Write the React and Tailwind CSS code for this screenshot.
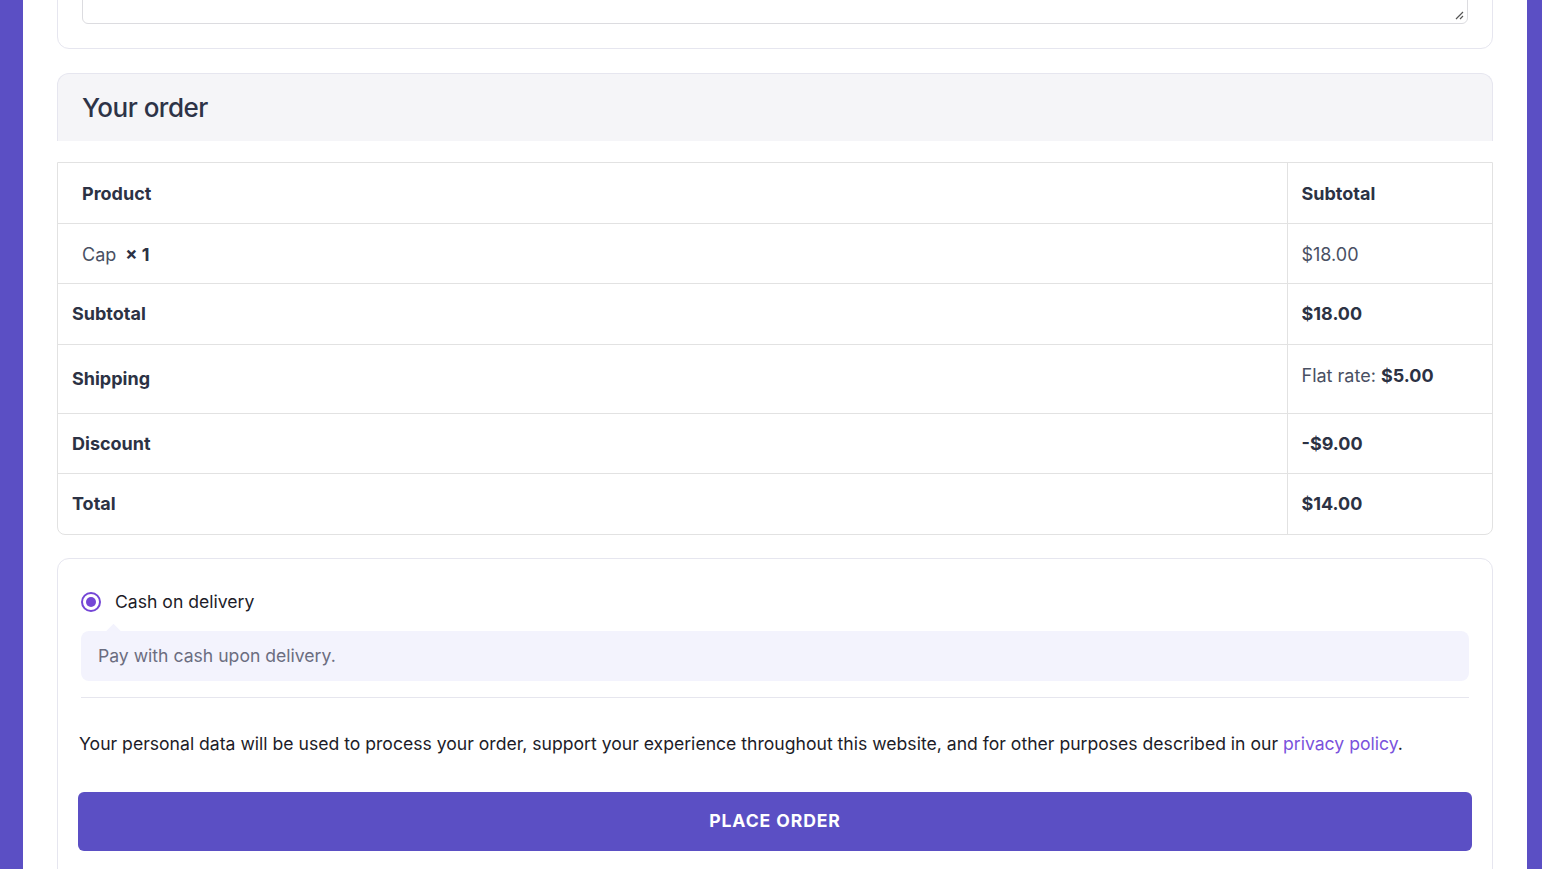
import React from 'react'

const font = { fontFamily: 'Inter, "Noto Sans", Arial, sans-serif' }

function Row({ label, children, h = 'h-[61px]', tall, last }) {
  return (
    <tr className={last ? '' : 'border-b border-[#e2e2e2]'}>
      <th className={`text-left font-bold text-[#2c3244] pl-[14px] ${h}`}>{label}</th>
      <td className={`border-l border-[#e2e2e2] pl-[14px] font-bold text-[#2c3244] ${tall ? 'align-top pt-[17px]' : ''}`}>
        {children}
      </td>
    </tr>
  )
}

export default function App() {
  return (
    <div className="flex h-[869px] overflow-hidden bg-white text-[17.6px]" style={font}>
      <div className="w-[23px] shrink-0 bg-[#5b4fc4]" />
      <div className="flex-1 px-[34px]">
        {/* notes card, scrolled mostly out of view */}
        <div className="-mt-[101px] rounded-xl border border-[#e6e6ef] p-6">
          <div className="relative h-[100px] rounded-md border border-[#dcdce0]">
            <svg className="absolute bottom-[3px] right-[3px]" width="9" height="9" viewBox="0 0 9 9">
              <path d="M8 1L1 8M8 5L5 8" stroke="#555" strokeWidth="1.2" />
            </svg>
          </div>
        </div>

        <div className="mt-6 h-[68px] rounded-t-xl border-x border-t border-[#e6e6ef] bg-[#f5f5f8] px-6 flex items-center">
          <h3 className="text-[26px] font-medium tracking-[-0.5px] text-[#2d3347]">Your order</h3>
        </div>

        <div className="mt-[21px] overflow-hidden rounded-b-lg border border-[#e2e2e2] text-[18px]">
          <table className="w-full border-collapse">
            <thead>
              <tr className="border-b border-[#e2e2e2]">
                <th className="h-[60px] pl-6 pt-[2px] text-left font-bold text-[#2c3244]">Product</th>
                <th className="w-[205px] border-l border-[#e2e2e2] pl-[14px] pt-[2px] text-left font-bold text-[#2c3244]">Subtotal</th>
              </tr>
            </thead>
            <tbody>
              <tr className="border-b border-[#e2e2e2]">
                <td className="h-[60px] pl-6 pt-[2px] text-[#495063]">
                  Cap <strong className="ml-1 font-bold text-[#2c3244]">× 1</strong>
                </td>
                <td className="border-l border-[#e2e2e2] pl-[14px] pt-[2px] text-[#495063]">$18.00</td>
              </tr>
            </tbody>
            <tfoot>
              <Row label="Subtotal">$18.00</Row>
              <Row label="Shipping" h="h-[69px]" tall>
                <span className="font-normal text-[#495063]">Flat rate: </span>$5.00
              </Row>
              <Row label="Discount" h="h-[60px]">-$9.00</Row>
              <Row label="Total" last>$14.00</Row>
            </tfoot>
          </table>
        </div>

        <div className="mt-[23px] rounded-xl border border-[#e6e6ef] px-[21px] pt-[30px] pb-8">
          <div className="px-[2px]">
            <label className="flex items-center gap-[14px] text-[17.6px] text-[#1c1c28]">
              <span className="flex h-5 w-5 items-center justify-center rounded-full border-2 border-[#7446d6]">
                <span className="h-[10px] w-[10px] rounded-full bg-[#7446d6]" />
              </span>
              Cash on delivery
            </label>
            <div className="relative mt-4 rounded-lg bg-[#f3f3fd] px-[17px] py-3 leading-[26px] text-[#6b6d80]">
              <span className="absolute -top-[5px] left-[27px] h-[11px] w-[11px] rotate-45 bg-[#f3f3fd]" />
              Pay with cash upon delivery.
            </div>
            <div className="mt-4 border-t border-[#e6e6ee]" />
          </div>
          <p className="mt-[33px] text-[#1c1c28]">
            Your personal data will be used to process your order, support your experience throughout this website, and for other purposes described in our{' '}
            <a className="text-[#7a52dc]">privacy policy</a>.
          </p>
          <button className="-mx-px mt-[34px] h-[59px] w-[calc(100%+2px)] rounded-md bg-[#5b4fc4] text-[17.6px] font-bold tracking-[0.9px] text-white">
            PLACE ORDER
          </button>
        </div>
      </div>
      <div className="w-[15px] shrink-0 bg-[#5b4fc4]" />
    </div>
  )
}
